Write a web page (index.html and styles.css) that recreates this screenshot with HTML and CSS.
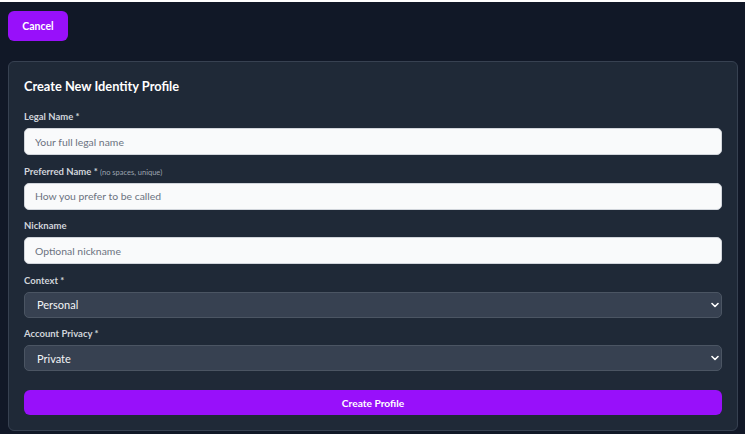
FILE: index.html
```html
<!DOCTYPE html>
<html lang="en">
<head>
<meta charset="utf-8">
<title>Create New Identity Profile</title>
<link rel="stylesheet" href="styles.css">
</head>
<body>
<div class="page">
  <div class="top-bar">
    <button class="btn btn-cancel" type="button">Cancel</button>
  </div>
  <form class="card">
    <h2 class="card-title">Create New Identity Profile</h2>
    <div class="field">
      <label class="label">Legal Name *</label>
      <input class="input" type="text" placeholder="Your full legal name">
    </div>
    <div class="field">
      <label class="label">Preferred Name * <span class="hint">(no spaces, unique)</span></label>
      <input class="input" type="text" placeholder="How you prefer to be called">
    </div>
    <div class="field">
      <label class="label">Nickname</label>
      <input class="input" type="text" placeholder="Optional nickname">
    </div>
    <div class="field">
      <label class="label">Context *</label>
      <div class="select-wrap">
        <select class="select"><option>Personal</option></select>
        <svg class="chevron" viewBox="0 0 8 6" width="8" height="6"><path d="M1 1.5 L4 4.5 L7 1.5" fill="none" stroke="#ffffff" stroke-width="1.6" stroke-linecap="round" stroke-linejoin="round"/></svg>
      </div>
    </div>
    <div class="field">
      <label class="label">Account Privacy *</label>
      <div class="select-wrap">
        <select class="select"><option>Private</option></select>
        <svg class="chevron" viewBox="0 0 8 6" width="8" height="6"><path d="M1 1.5 L4 4.5 L7 1.5" fill="none" stroke="#ffffff" stroke-width="1.6" stroke-linecap="round" stroke-linejoin="round"/></svg>
      </div>
    </div>
    <button class="btn btn-submit" type="button">Create Profile</button>
  </form>
</div>
</body>
</html>
```
FILE: styles.css
```css
* { box-sizing: border-box; }
html, body { margin: 0; padding: 0; background: #ffffff; }
body {
  font-family: Lato, "Noto Sans", sans-serif;
  color: #f3f4f6;
}
.page {
  margin: 2px 2px 0 0;
  height: 432px;
  background: #111827;
  padding: 9px 7px 0 8px;
  display: flex;
  flex-direction: column;
  gap: 20px;
}
.top-bar { display: flex; }
.btn {
  border: none;
  background: #9810fa;
  color: #ffffff;
  font-family: inherit;
  font-weight: 700;
  cursor: pointer;
  border-radius: 6px;
}
.btn-cancel {
  width: 60px;
  height: 30px;
  font-size: 10.5px;
  padding: 0;
}
.card {
  background: #1f2937;
  border: 1px solid #374151;
  border-radius: 6px;
  padding: 15px;
  display: flex;
  flex-direction: column;
}
.card-title {
  margin: 0 0 15px 0;
  font-size: 12.8px;
  line-height: 19px;
  font-weight: 700;
  color: #ffffff;
}
.field {
  display: flex;
  flex-direction: column;
  margin-bottom: 10.5px;
}
.label {
  display: block;
  height: 12px;
  font-size: 9.5px;
  line-height: 12px;
  font-weight: 700;
  color: #d1d5db;
  margin-bottom: 5px;
}
.hint {
  font-size: 7.5px;
  line-height: 12px;
  font-weight: 400;
  color: #9ca3af;
}
.input {
  height: 27px;
  border: 1px solid #d1d5db;
  border-radius: 5px;
  background: #f9fafb;
  padding: 0 10px;
  font-family: inherit;
  font-size: 10.4px;
  color: #111827;
  outline: none;
}
.input::placeholder { color: #6b7280; }
.select-wrap { position: relative; }
.select {
  width: 100%;
  height: 26px;
  appearance: none;
  -webkit-appearance: none;
  background: #374151;
  border: 1px solid #4b5563;
  border-radius: 5px;
  padding: 0 12px;
  font-family: inherit;
  font-size: 11px;
  color: #f3f4f6;
  outline: none;
}
.chevron {
  position: absolute;
  right: 3px;
  top: 10px;
}
.btn-submit {
  margin-top: 8.5px;
  height: 25px;
  font-size: 10.2px;
}
```
